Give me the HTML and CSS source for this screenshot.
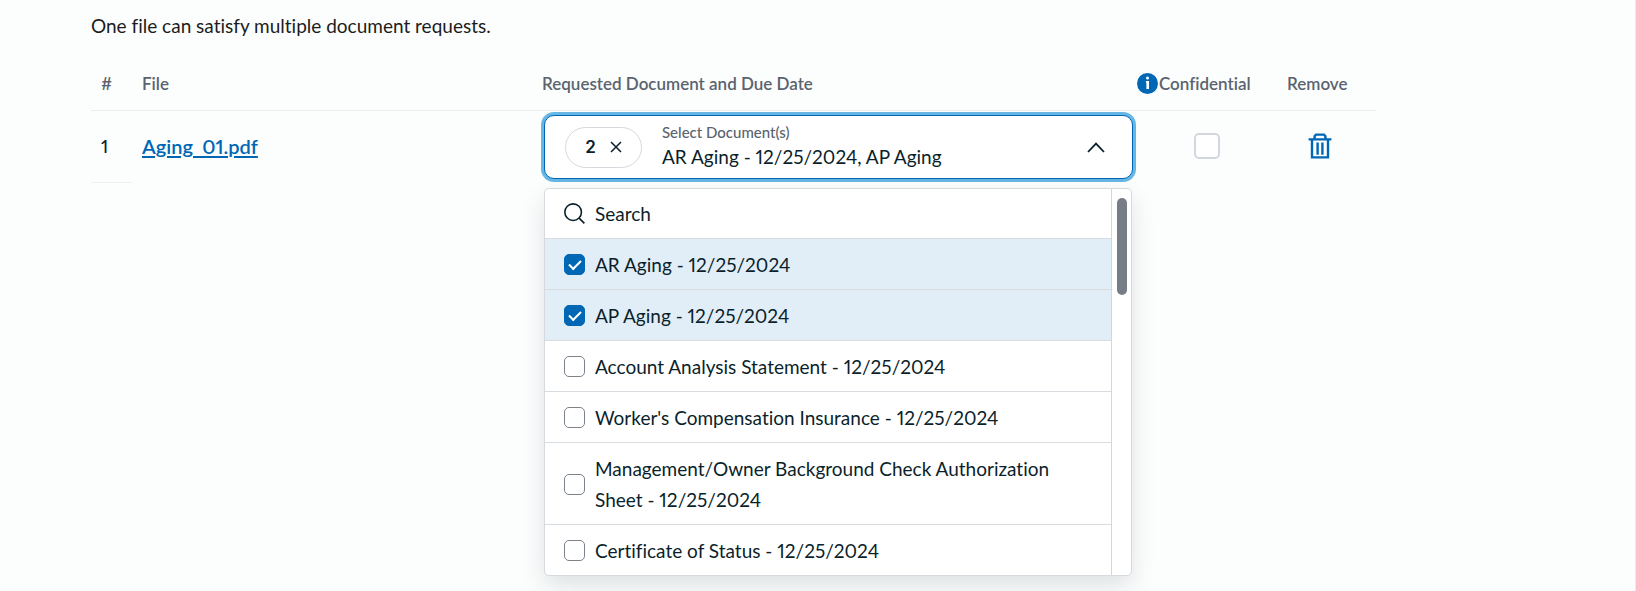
FILE: index.html
```
<!DOCTYPE html>
<html lang="en">
<head>
  <meta charset="UTF-8" />
  <meta name="viewport" content="width=device-width, initial-scale=1.0"/>
  <title>Upload Documents</title>
  <link rel="stylesheet" href="styles.css">
</head>
<body>

<main class="upload">
  <p class="hint">One file can satisfy multiple document requests.</p>

  <table class="files">
    <thead>
      <tr>
        <th class="col-num">#</th>
        <th class="col-file">File</th>
        <th class="col-docs">Requested Document and Due Date</th>
        <th class="col-conf">
          <div class="conf-head">
            <svg class="info" viewBox="0 0 21 21" aria-hidden="true">
              <circle cx="10.5" cy="10.5" r="10.5" fill="#0067b5"/>
              <circle cx="10.5" cy="5" r="1.5" fill="#fff"/>
              <path d="M8.9 8h3.1v8H9.4V9.4h-.5z" fill="#fff"/>
            </svg>
            <span id="confLabel">Confidential</span>
          </div>
        </th>
        <th class="col-remove">Remove</th>
      </tr>
    </thead>
    <tbody>
      <tr>
        <td class="num">1</td>
        <td><a class="file-link" href="#">Aging_01.pdf</a></td>
        <td class="docs">
          <div class="select">
            <div class="select-box">
              <button class="pill" type="button" aria-label="Clear 2 selected documents">
                <span>2</span>
                <svg class="close" viewBox="0 0 12 12" aria-hidden="true">
                  <path d="M1 1l10 10M11 1L1 11"/>
                </svg>
              </button>
              <button class="select-toggle" type="button" aria-expanded="true" aria-controls="docMenu">
                <span class="select-text">
                  <span class="select-label">Select Document(s)</span>
                  <span class="select-value">AR Aging - 12/25/2024, AP Aging</span>
                </span>
                <svg class="chevron" viewBox="0 0 18 11" aria-hidden="true">
                  <path d="M1 10l8-8.4L17 10"/>
                </svg>
              </button>
            </div>

            <div class="menu" id="docMenu">
              <div class="options">
                <label class="option search">
                  <svg class="search-icon" viewBox="0 0 20 20" aria-hidden="true">
                    <circle cx="8.7" cy="8.7" r="7.9"/>
                    <path d="M14.4 14.4l5 5"/>
                  </svg>
                  <input type="text" placeholder="Search" aria-label="Search documents">
                </label>
                <label class="option selected"><input type="checkbox" checked><span>AR Aging - 12/25/2024</span></label>
                <label class="option selected"><input type="checkbox" checked><span>AP Aging - 12/25/2024</span></label>
                <label class="option"><input type="checkbox"><span>Account Analysis Statement - 12/25/2024</span></label>
                <label class="option"><input type="checkbox"><span>Worker's Compensation Insurance - 12/25/2024</span></label>
                <label class="option"><input type="checkbox"><span>Management/Owner Background Check Authorization Sheet - 12/25/2024</span></label>
                <label class="option"><input type="checkbox"><span>Certificate of Status - 12/25/2024</span></label>
              </div>
              <div class="track"><div class="thumb"></div></div>
            </div>
          </div>
        </td>
        <td class="conf"><input type="checkbox" aria-labelledby="confLabel"></td>
        <td class="remove">
          <button class="trash" type="button" aria-label="Remove Aging_01.pdf">
            <svg viewBox="0 0 24 26" aria-hidden="true">
              <path d="M.6 6.4h22.8M4 6.5v17.9h16V6.5M6.6 6V3.2L8 1.6h8l1.4 1.6V6M9.6 9.4v12.4M14.4 9.4v12.4"/>
            </svg>
          </button>
        </td>
      </tr>
    </tbody>
  </table>
</main>

</body>
</html>
```
FILE: styles.css
```
* {
  box-sizing: border-box;
}
body {
  margin: 0;
  min-height: 100vh;
  background: #fcfefe;
  border-right: 1px solid #ece9ee;
  font-family: Lato, "Open Sans", sans-serif;
  font-size: 19px;
  font-variant-ligatures: none;
  font-variant-numeric: proportional-nums;
  line-height: 31px;
  color: #0b1f2b;
}
button, input {
  font: inherit;
  color: inherit;
}
button {
  padding: 0;
  border: none;
  background: none;
  cursor: pointer;
}
svg {
  flex-shrink: 0;
  fill: none;
}
.upload {
  padding: 10px 259px 0 91px;
}
.hint {
  margin: 0;
  color: #1c1c1c;
}
.files {
  width: 100%;
  margin-top: 16px;
  table-layout: fixed;
  border-collapse: collapse;
}
.files th {
  height: 53px;
  padding: 0 10px;
  border-bottom: 1px solid #ecedf0;
  font-size: 17px;
  font-weight: 600;
  text-align: left;
  white-space: nowrap;
  color: #5a636e;
}
.files td {
  height: 72px;
  padding: 0 10px;
}
.col-num { width: 41px; }
.col-file { width: 400px; }
.files .col-conf {
  width: 140px;
  padding: 0;
}
.col-remove { width: 99px; }
.conf-head {
  display: flex;
  align-items: center;
  gap: 1px;
}
.info {
  width: 21px;
  height: 21px;
}
.files .num {
  font-size: 18px;
  font-weight: 500;
  border-bottom: 1px solid #f0f0f2;
}
.file-link {
  color: #0067b5;
  font-size: 20px;
  font-weight: 600;
  text-decoration-thickness: 2px;
  text-underline-offset: 2px;
}
.files .docs {
  padding: 2px 4px 0 12px;
}

/* document picker */
.select {
  position: relative;
}
.select-box {
  display: flex;
  align-items: center;
  gap: 20px;
  height: 64px;
  padding: 0 20px;
  background: #fff;
  border: 1px solid #0067b5;
  border-radius: 10px;
  box-shadow: 0 0 0 3px #66b6e6;
}
.pill {
  display: flex;
  align-items: center;
  justify-content: center;
  gap: 14px;
  width: 77px;
  height: 41px;
  border: 1px solid #d6d8de;
  border-radius: 21px;
  font-family: Inter, sans-serif;
  font-size: 17px;
  font-weight: 600;
}
.close {
  width: 12px;
  height: 12px;
  stroke: #0b1f2b;
  stroke-width: 1.5;
}
.select-toggle {
  flex: 1;
  display: flex;
  align-items: center;
  justify-content: space-between;
  padding-right: 7px;
  text-align: left;
}
.select-text {
  display: flex;
  flex-direction: column;
}
.select-label {
  font-size: 15px;
  font-weight: 500;
  line-height: 20px;
  color: #5a636e;
}
.select-value {
  line-height: 30px;
}
.chevron {
  width: 18px;
  height: 11px;
  stroke: #0b1f2b;
  stroke-width: 1.8;
}
.menu {
  position: absolute;
  top: calc(100% + 9px);
  left: 0;
  right: 1px;
  display: flex;
  background: #fff;
  border: 1px solid #d6dade;
  border-radius: 5px;
  box-shadow: 0 10px 24px rgba(0,20,30,0.12);
  overflow: hidden;
}
.options {
  flex: 1;
}
.option {
  display: flex;
  align-items: center;
  gap: 10px;
  padding: 10px 20px 9px 19px;
  border-bottom: 1px solid #d9dde2;
}
.option:last-child {
  border-bottom: none;
}
.option.selected {
  background: #e1eef8;
}
.option.search {
  padding-top: 9px;
}
.search input {
  flex: 1;
  min-width: 0;
  height: 31px;
  padding: 0;
  border: none;
  outline: none;
  background: none;
}
.search input::placeholder {
  color: #0b1f2b;
  opacity: 1;
}
.search-icon {
  width: 21px;
  height: 21px;
  stroke: #0b1f2b;
  stroke-width: 1.5;
}
input[type="checkbox"] {
  appearance: none;
  flex-shrink: 0;
  width: 21px;
  height: 21px;
  margin: 0;
  background: #fff;
  border: 1px solid #7c828a;
  border-radius: 5px;
}
input[type="checkbox"]:checked {
  display: grid;
  place-items: center;
  background: #0067b5;
  border-color: #0067b5;
}
input[type="checkbox"]:checked::before {
  content: "";
  width: 10px;
  height: 5px;
  margin-bottom: 3px;
  border-left: 2px solid #fff;
  border-bottom: 2px solid #fff;
  transform: rotate(-45deg);
}
.track {
  width: 20px;
  padding: 9px 4px;
  border-left: 1px solid #d3d7dd;
}
.thumb {
  width: 10px;
  height: 97px;
  margin: 0 auto;
  background: #777d86;
  border-radius: 5px;
}

.conf input[type="checkbox"] {
  display: block;
  width: 26px;
  height: 26px;
  margin: 0 auto;
  border: 2px solid #d4d6de;
}
.remove {
  text-align: left;
}
.trash {
  display: block;
  width: 24px;
  height: 26px;
  margin: 0 21px;
}
.trash svg {
  display: block;
  width: 24px;
  height: 26px;
  stroke: #0067b5;
  stroke-width: 2.4;
}
```
